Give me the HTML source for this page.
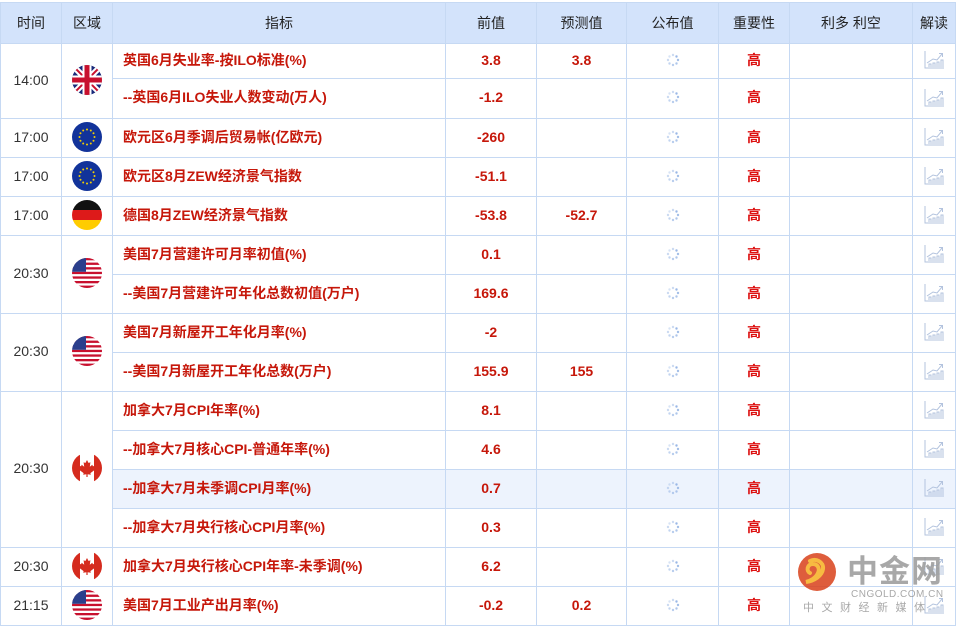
<!DOCTYPE html>
<html><head><meta charset="utf-8"><style>
body{margin:0;background:#fff;width:956px;height:624px;overflow:hidden;position:relative;font-family:"Liberation Sans","Noto Sans CJK SC",sans-serif}
table{position:absolute;left:0;top:2px;border-collapse:collapse;table-layout:fixed;width:955px}
td,th{border:1px solid #c6d9f3;padding:0;text-align:center;font-size:14px}
th{background:#d3e3fb;font-weight:normal;color:#222;height:40px}
td{color:#333;padding-bottom:3px}
.n{color:#c6170a;font-weight:bold;text-align:left;padding-left:10px}
.v{color:#c6170a;font-weight:bold}
.h{color:#d11;font-weight:bold}
.hl td{background:#edf3fd}
svg{display:block;margin:0 auto}
.wm{position:absolute;left:797px;top:552px;opacity:.85}
</style></head><body>
<svg width="0" height="0" style="position:absolute"><defs>
<clipPath id="c"><circle cx="15" cy="15" r="15"/></clipPath>
<g id="uk"><g clip-path="url(#c)"><rect width="30" height="30" fill="#1a2a7a"/><path d="M0 0L30 30M30 0L0 30" stroke="#fff" stroke-width="6"/><path d="M0 0L30 30M30 0L0 30" stroke="#c8102e" stroke-width="2"/><path d="M15 0V30M0 15H30" stroke="#fff" stroke-width="9"/><path d="M15 0V30M0 15H30" stroke="#c8102e" stroke-width="5"/></g></g>
<g id="eu"><circle cx="15" cy="15" r="15" fill="#12339a"/><g fill="#f4d000"><circle cx="15" cy="7.5" r="1"/><circle cx="18.8" cy="8.5" r="1"/><circle cx="21.5" cy="11.2" r="1"/><circle cx="22.5" cy="15" r="1"/><circle cx="21.5" cy="18.8" r="1"/><circle cx="18.8" cy="21.5" r="1"/><circle cx="15" cy="22.5" r="1"/><circle cx="11.2" cy="21.5" r="1"/><circle cx="8.5" cy="18.8" r="1"/><circle cx="7.5" cy="15" r="1"/><circle cx="8.5" cy="11.2" r="1"/><circle cx="11.2" cy="8.5" r="1"/></g></g>
<g id="de"><g clip-path="url(#c)"><rect width="30" height="10" fill="#111"/><rect y="10" width="30" height="10" fill="#dd1a1a"/><rect y="20" width="30" height="10" fill="#ffcc00"/></g></g>
<g id="us"><g clip-path="url(#c)"><rect width="30" height="30" fill="#fff"/><g fill="#c8102e"><rect y="0" width="30" height="2.3"/><rect y="4.6" width="30" height="2.3"/><rect y="9.2" width="30" height="2.3"/><rect y="13.8" width="30" height="2.3"/><rect y="18.4" width="30" height="2.3"/><rect y="23" width="30" height="2.3"/><rect y="27.6" width="30" height="2.4"/></g><rect width="14" height="13.8" fill="#2b3f8c"/></g></g>
<g id="ca"><g clip-path="url(#c)"><rect width="30" height="30" fill="#fff"/><rect width="8" height="30" fill="#d52b1e"/><rect x="22" width="8" height="30" fill="#d52b1e"/><path d="M15 7l1.6 3 1.8-.8-.6 4.5 2.5-2 .6 1.6 2-.4-1 3 1 .8-4.5 3.4.4 1.6-3.2-.5V24h-1.2v-2.8l-3.2.5.4-1.6-4.5-3.4 1-.8-1-3 2 .4.6-1.6 2.5 2-.6-4.5 1.8.8z" fill="#d52b1e"/></g></g>
<g id="ld" fill="#9ab8e6"><circle cx="7" cy="2" r="1.2" opacity=".5"/><circle cx="10.5" cy="3.5" r="1.2"/><circle cx="12" cy="7" r="1.2" opacity=".9"/><circle cx="10.5" cy="10.5" r="1.2" opacity=".8"/><circle cx="7" cy="12" r="1.2" opacity=".7"/><circle cx="3.5" cy="10.5" r="1.2" opacity=".6"/><circle cx="2" cy="7" r="1.2" opacity=".5"/><circle cx="3.5" cy="3.5" r="1.2" opacity=".4"/></g>
<g id="ch" fill="none" stroke="#b3c3de" stroke-width="1"><path d="M1 1V18H20"/><path d="M3 13L9 9L13 10L18 4"/><path d="M15 3.5h3.5V7"/><path d="M5 17v-3h2v3M9 17v-4h2v4M13 17v-5h2v5M17 17v-7h2v7"/></g>
</defs></svg>
<table>
<colgroup><col style="width:61px"><col style="width:51px"><col style="width:333px"><col style="width:91px"><col style="width:90px"><col style="width:92px"><col style="width:71px"><col style="width:123px"><col style="width:43px"></colgroup>
<tr><th>时间</th><th>区域</th><th>指标</th><th>前值</th><th>预测值</th><th>公布值</th><th>重要性</th><th>利多 利空</th><th>解读</th></tr>
<tr style="height:35px"><td rowspan="2">14:00</td><td rowspan="2"><svg width="30" height="30"><use href="#uk"/></svg></td><td class="n">英国6月失业率-按ILO标准(%)</td><td class="v">3.8</td><td class="v">3.8</td><td><svg width="14" height="14"><use href="#ld"/></svg></td><td class="h">高</td><td></td><td><svg width="21" height="19"><use href="#ch"/></svg></td></tr>
<tr style="height:40px"><td class="n">--英国6月ILO失业人数变动(万人)</td><td class="v">-1.2</td><td></td><td><svg width="14" height="14"><use href="#ld"/></svg></td><td class="h">高</td><td></td><td><svg width="21" height="19"><use href="#ch"/></svg></td></tr>
<tr style="height:39px"><td>17:00</td><td><svg width="30" height="30"><use href="#eu"/></svg></td><td class="n">欧元区6月季调后贸易帐(亿欧元)</td><td class="v">-260</td><td></td><td><svg width="14" height="14"><use href="#ld"/></svg></td><td class="h">高</td><td></td><td><svg width="21" height="19"><use href="#ch"/></svg></td></tr>
<tr style="height:39px"><td>17:00</td><td><svg width="30" height="30"><use href="#eu"/></svg></td><td class="n">欧元区8月ZEW经济景气指数</td><td class="v">-51.1</td><td></td><td><svg width="14" height="14"><use href="#ld"/></svg></td><td class="h">高</td><td></td><td><svg width="21" height="19"><use href="#ch"/></svg></td></tr>
<tr style="height:39px"><td>17:00</td><td><svg width="30" height="30"><use href="#de"/></svg></td><td class="n">德国8月ZEW经济景气指数</td><td class="v">-53.8</td><td class="v">-52.7</td><td><svg width="14" height="14"><use href="#ld"/></svg></td><td class="h">高</td><td></td><td><svg width="21" height="19"><use href="#ch"/></svg></td></tr>
<tr style="height:39px"><td rowspan="2">20:30</td><td rowspan="2"><svg width="30" height="30"><use href="#us"/></svg></td><td class="n">美国7月营建许可月率初值(%)</td><td class="v">0.1</td><td></td><td><svg width="14" height="14"><use href="#ld"/></svg></td><td class="h">高</td><td></td><td><svg width="21" height="19"><use href="#ch"/></svg></td></tr>
<tr style="height:39px"><td class="n">--美国7月营建许可年化总数初值(万户)</td><td class="v">169.6</td><td></td><td><svg width="14" height="14"><use href="#ld"/></svg></td><td class="h">高</td><td></td><td><svg width="21" height="19"><use href="#ch"/></svg></td></tr>
<tr style="height:39px"><td rowspan="2">20:30</td><td rowspan="2"><svg width="30" height="30"><use href="#us"/></svg></td><td class="n">美国7月新屋开工年化月率(%)</td><td class="v">-2</td><td></td><td><svg width="14" height="14"><use href="#ld"/></svg></td><td class="h">高</td><td></td><td><svg width="21" height="19"><use href="#ch"/></svg></td></tr>
<tr style="height:39px"><td class="n">--美国7月新屋开工年化总数(万户)</td><td class="v">155.9</td><td class="v">155</td><td><svg width="14" height="14"><use href="#ld"/></svg></td><td class="h">高</td><td></td><td><svg width="21" height="19"><use href="#ch"/></svg></td></tr>
<tr style="height:39px"><td rowspan="4">20:30</td><td rowspan="4"><svg width="30" height="30"><use href="#ca"/></svg></td><td class="n">加拿大7月CPI年率(%)</td><td class="v">8.1</td><td></td><td><svg width="14" height="14"><use href="#ld"/></svg></td><td class="h">高</td><td></td><td><svg width="21" height="19"><use href="#ch"/></svg></td></tr>
<tr style="height:39px"><td class="n">--加拿大7月核心CPI-普通年率(%)</td><td class="v">4.6</td><td></td><td><svg width="14" height="14"><use href="#ld"/></svg></td><td class="h">高</td><td></td><td><svg width="21" height="19"><use href="#ch"/></svg></td></tr>
<tr style="height:39px" class="hl"><td class="n">--加拿大7月未季调CPI月率(%)</td><td class="v">0.7</td><td></td><td><svg width="14" height="14"><use href="#ld"/></svg></td><td class="h">高</td><td></td><td><svg width="21" height="19"><use href="#ch"/></svg></td></tr>
<tr style="height:39px"><td class="n">--加拿大7月央行核心CPI月率(%)</td><td class="v">0.3</td><td></td><td><svg width="14" height="14"><use href="#ld"/></svg></td><td class="h">高</td><td></td><td><svg width="21" height="19"><use href="#ch"/></svg></td></tr>
<tr style="height:39px"><td>20:30</td><td><svg width="30" height="30"><use href="#ca"/></svg></td><td class="n">加拿大7月央行核心CPI年率-未季调(%)</td><td class="v">6.2</td><td></td><td><svg width="14" height="14"><use href="#ld"/></svg></td><td class="h">高</td><td></td><td><svg width="21" height="19"><use href="#ch"/></svg></td></tr>
<tr style="height:39px"><td>21:15</td><td><svg width="30" height="30"><use href="#us"/></svg></td><td class="n">美国7月工业产出月率(%)</td><td class="v">-0.2</td><td class="v">0.2</td><td><svg width="14" height="14"><use href="#ld"/></svg></td><td class="h">高</td><td></td><td><svg width="21" height="19"><use href="#ch"/></svg></td></tr>
</table>
<div class="wm">
<svg width="40" height="40" style="position:absolute;left:0;top:0;margin:0"><circle cx="20" cy="20" r="19" fill="#d9411b"/><path d="M13 21c-4-2-3-9 3-9 5 0 7 5 5 9-2 5-8 8-12 9 8-1 16-6 17-13 1-7-7-11-13-8" fill="none" stroke="#f6b021" stroke-width="4" stroke-linecap="round"/></svg>
<div style="position:absolute;left:50px;top:-1px;font-size:31px;font-weight:bold;color:#9a9a9a;letter-spacing:1px;white-space:nowrap;font-family:'Noto Sans CJK SC',sans-serif;line-height:36px">中金网</div>
<div style="position:absolute;left:54px;top:37px;font-size:10px;color:#999;white-space:nowrap;letter-spacing:.5px">CNGOLD.COM.CN</div>
<div style="position:absolute;left:6px;top:47px;font-size:11px;color:#999;white-space:nowrap;letter-spacing:7.5px">中文财经新媒体</div>
</div>
</body></html>
